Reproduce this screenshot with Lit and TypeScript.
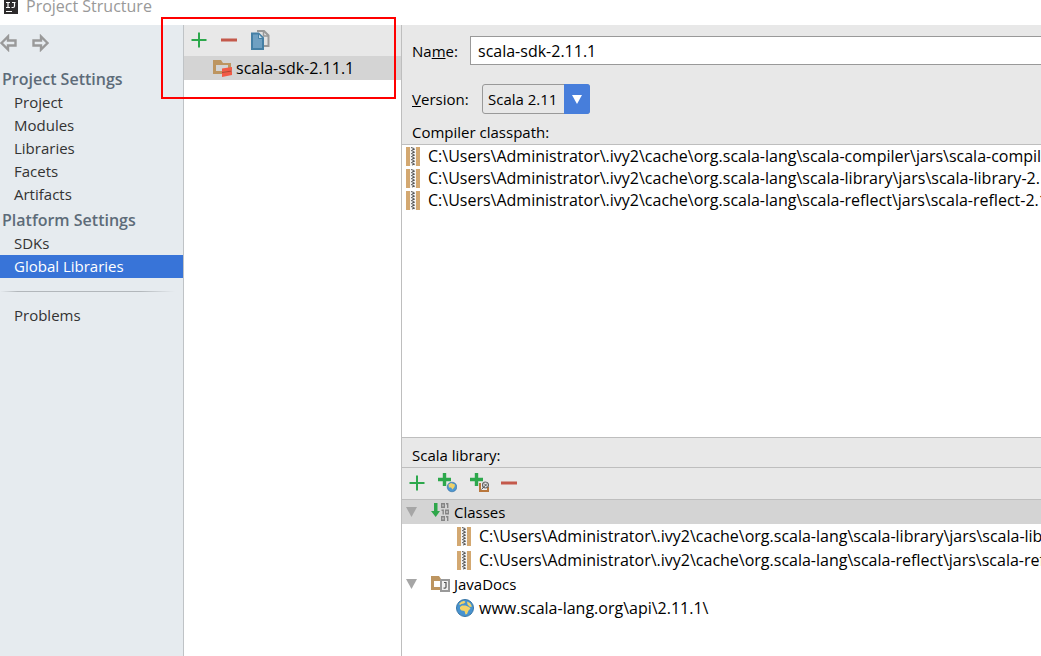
import { LitElement, html, svg, css } from "lit";
import { customElement, state } from "lit/decorators.js";

const ticks = [0, 1, 2, 3, 4, 5];
const CACHE = "C:\\Users\\Administrator\\.ivy2\\cache\\org.scala-lang\\";

const icons = {
  logo: html`<svg width="14" height="14" viewBox="0 0 14 14" aria-hidden="true">
    <rect width="14" height="14" fill="#2e2c2d" />
    <path d="M2 2.5h4M4 2.5v5M2 7.5h4M8 2.5h3.5M10.5 2.5V6q0 1.500-1.500 1.500H7.500" fill="none" stroke="#fff" stroke-width="1.200" />
    <path d="M2 11.500h6" stroke="#fff" />
  </svg>`,
  back: html`<svg width="17" height="18" viewBox="0 0 17 18" aria-hidden="true">
    <path d="M1.500 9L8 2.500V6.500H15.500V11.500H8V15.500Z" fill="none" stroke="#999" stroke-width="2.400" />
  </svg>`,
  forward: html`<svg width="17" height="18" viewBox="0 0 17 18" aria-hidden="true">
    <path d="M15.500 9L9 2.500V6.500H1.500V11.500H9V15.500Z" fill="none" stroke="#999" stroke-width="2.400" />
  </svg>`,
  add: html`<svg width="16" height="16" viewBox="0 0 16 16" aria-hidden="true">
    <path d="M8 0.500V15.500M0.500 8H15.500" stroke="#2da84c" stroke-width="2" />
  </svg>`,
  remove: html`<svg width="16" height="16" viewBox="0 0 16 16" aria-hidden="true">
    <rect y="6.500" width="16" height="3" fill="#c4594b" />
  </svg>`,
  copy: html`<svg width="20" height="20" viewBox="1 0 20 20" aria-hidden="true">
    <path d="M7 1H14L18.500 5.500V16H14" fill="#e2e2e2" stroke="#999" stroke-width="2" />
    <path d="M13.500 1V6H18" fill="none" stroke="#999" stroke-width="1.500" />
    <path d="M2 3.500H8.500L13 8V19H2Z" fill="#6fa0c2" stroke="#447fa5" stroke-width="2" />
    <path d="M8.500 3.500V8.500H13Z" fill="#c5dbe8" stroke="#447fa5" />
  </svg>`,
  sdk: html`<svg width="20" height="18" viewBox="0 0 20 18" aria-hidden="true">
    <path d="M0 1H8L10 4H18V15H0ZM3 6V12H15V6Z" fill="#bd9560" fill-rule="evenodd" />
    <path d="M9 9.500L19 8V11.500L9 13ZM9 14L19 12.500V16L9 18Z" fill="#f25a46" />
    <path d="M9 13L19 11.500V12.500L9 14Z" fill="#bb3d30" />
  </svg>`,
  addUrl: html`<svg width="20" height="20" viewBox="-1 1 20 20" aria-hidden="true">
    <path d="M6.500 1V14M0 7.500H13" stroke="#2da84c" stroke-width="3.400" />
    <circle cx="14" cy="15" r="4.800" fill="#4d97d2" stroke="#346f9e" stroke-width="0.600" />
    <path d="M10.500 12.500L13 11L17 12.500L16.500 15L14.500 17.500L13 15.500H11Z" fill="#efd168" />
  </svg>`,
  addArchive: html`<svg width="20" height="20" viewBox="-1 1 20 20" aria-hidden="true">
    <path d="M6.500 1V14M0 7.500H13" stroke="#2da84c" stroke-width="3.400" />
    <path d="M10 11V19H18V15" fill="#eee" stroke="#b9773c" stroke-width="2" />
    <circle cx="15.500" cy="13" r="3" fill="#e8e8e8" stroke="#666" stroke-width="1.200" />
    <path d="M11.500 17.500L17 11.500M14 11.500L17 14.500" stroke="#555" />
  </svg>`,
  classes: html`<svg width="19" height="20" viewBox="0 0 19 20" aria-hidden="true">
    <path d="M3 1H6.500V9H9L4.700 15L0 9H3Z" fill="#2fa74b" />
    <g fill="none" stroke="#858585" stroke-width="1.400">
      <path d="M10.700 1.700H13.300V5.300H10.700ZM15 1.700H16.700V6" />
      <path d="M10.500 8.200H12.200V12.500M14.700 8.200H17.300V11.800H14.700Z" />
      <path d="M10.700 14.700H13.300V18.300H10.700ZM15 14.700H16.700V19" />
    </g>
  </svg>`,
  docs: html`<svg width="19" height="18" viewBox="0 0 19 18" aria-hidden="true">
    <path d="M0 1H8L10 4H17V5H9V6H3V12H9V15H0Z" fill="#bd9560" />
    <rect x="10" y="5" width="8" height="11" fill="#f1f1f1" stroke="#999" stroke-width="2" />
    <path d="M13 7.500H15V12Q15 13.500 12.500 13" fill="none" stroke="#555" stroke-width="1.200" />
  </svg>`,
  globe: html`<svg width="18" height="18" viewBox="0 0 18 18" aria-hidden="true">
    <circle cx="9" cy="9" r="8.500" fill="#4793d0" stroke="#3976a5" />
    <path d="M3 5Q5 2 8 1.800L9.500 3L8 4.500L5.500 5L4 6ZM4 8L6 6.500L9.500 6.500L13 8L14.500 9.500L12.500 11.500L11 15L9.500 15.500L8.500 12L5.500 11.500L4 10ZM11 2.500L14 4L16 7.500L14 8L11.500 5.500Z" fill="#f3d468" />
  </svg>`,
  jar: html`<svg width="14" height="19" viewBox="0 0 14 19" aria-hidden="true">
    <rect width="4" height="19" fill="#d3a871" /><rect x="10" width="4" height="19" fill="#d3a871" />
    <rect x="4" width="6" height="19" fill="#f6f6f6" />
    ${ticks.map((i) => svg`<path d=${`M5 ${i * 3 + 0.5}l3 1M9 ${i * 3 + 2}l-3 1`} stroke="#555" />`)}
  </svg>`,
  open: html`<svg width="11" height="10" viewBox="0 0 11 10" aria-hidden="true"><path d="M0 0H11L5.500 10Z" fill="#a6a6a6" /></svg>`,
};

@customElement("app-root")
export class AppRoot extends LitElement {
  @state() private section = "Global Libraries";

  static styles = css`
    :host {
      display: grid;
      grid-template-rows: 25px 1fr;
      position: relative;
      min-height: 100vh;
      overflow: hidden;
      background: #fff;
      color: #000;
      font: 15px/22px "Open Sans", "Noto Sans", sans-serif;
    }
    * { box-sizing: border-box; }
    svg { display: block; flex: none; }
    button { border: 0; padding: 0; background: none; font: inherit; color: inherit; text-align: left; }
    ul { list-style: none; margin: 0; padding: 0; }
    .title { display: flex; gap: 8px; padding: 0 4px; color: #999; font-size: 16px; line-height: 13px; }
    .body { display: grid; grid-template-columns: 184px 218px minmax(0, 1fr); }
    .side { background: #e6ebef; border-right: 1px solid #bfc3c6; color: #333; }
    .history { display: flex; gap: 15px; padding: 9px 0 16px; }
    .heading { margin: 0; padding: 0 2px; font-size: 16px; line-height: 23px; font-weight: 600; color: #5d6b79; }
    .heading.next { padding-top: 3px; }
    .link { display: block; width: 100%; padding: 0 14px; line-height: 23px; }
    .link.on { background: #3874d8; color: #fff; }
    .rule { height: 1px; margin: 13px 8px 12px 0; border: 0; background: linear-gradient(90deg, #e6ebef, #b2b7bb 10%, #b2b7bb 80%, #e6ebef); }
    .libs { border-right: 1px solid #bebebe; }
    .tools { display: flex; align-items: center; gap: 14px; height: 31px; padding: 0 7px 2px; background: #e8e8e8; }
    .lib { display: flex; align-items: center; gap: 3px; width: 100%; height: 24px; padding: 0 29px; background: #d4d4d4; font-size: 16px; }
    .detail { display: flex; flex-direction: column; min-width: 0; background: #e8e8e8; }
    .field { display: flex; align-items: center; padding: 11px 0 0 10px; }
    .field.version { padding-top: 19px; }
    .name-label { width: 58px; }
    .version-label { width: 70px; }
    .name { flex: 1; min-width: 0; height: 29px; padding: 0 7px; border: 1px solid #999; border-right: 0; background: #fff; font: inherit; font-size: 16px; color: inherit; outline: 0; }
    .combo { display: grid; grid-template-columns: 82px 26px; height: 30px; }
    .combo select { grid-area: 1 / 1 / 2 / 3; appearance: none; border: 1px solid #999; border-radius: 3px; padding: 0 5px; background: #e8e8e8; font: inherit; color: inherit; }
    .arrow { grid-area: 1 / 2 / 2 / 3; z-index: 1; display: grid; place-items: center; border-radius: 0 3px 3px 0; background: #477edb; pointer-events: none; }
    .caption { padding: 7px 10px 1px; line-height: 22px; }
    .paths { height: 294px; border: solid #bebebe; border-width: 1px 0; background: #fff; font-size: 16px; }
    .path { display: flex; align-items: center; gap: 8px; height: 22px; padding-left: 4px; white-space: nowrap; overflow: hidden; }
    .caption.library { padding: 6px 10px 1px; }
    .tools.bar { height: 33px; gap: 12px; border: solid #bebebe; border-width: 1px 0; }
    .tree { flex: 1; background: #fff; }
    .row { display: flex; align-items: center; height: 24px; gap: 4px; padding-left: 4px; white-space: nowrap; overflow: hidden; }
    .row.on { background: #d4d4d4; }
    .row .toggle { margin-right: 10px; }
    .row.leaf { padding-left: 55px; gap: 8px; font-size: 16px; }
    .row.url { padding-left: 54px; gap: 5px; font-size: 16px; }
    .callout { position: absolute; left: 161px; top: 17px; width: 235px; height: 82px; border: 2px solid #f00; pointer-events: none; }
  `;

  private link(name: string) {
    return html`<li><button class="link ${this.section === name ? "on" : ""}" @click=${() => (this.section = name)}>${name}</button></li>`;
  }

  private tool(label: string, icon: unknown) {
    return html`<button aria-label=${label}>${icon}</button>`;
  }

  render() {
    return html`
      <header class="title">${icons.logo}<span>Project Structure</span></header>
      <div class="body">
        <nav class="side">
          <div class="history">${this.tool("Back", icons.back)}${this.tool("Forward", icons.forward)}</div>
          <h2 class="heading">Project Settings</h2>
          <ul>${["Project", "Modules", "Libraries", "Facets", "Artifacts"].map((n) => this.link(n))}</ul>
          <h2 class="heading next">Platform Settings</h2>
          <ul>${["SDKs", "Global Libraries"].map((n) => this.link(n))}</ul>
          <hr class="rule" />
          <ul>${this.link("Problems")}</ul>
        </nav>
        <section class="libs">
          <div class="tools">${this.tool("Add", icons.add)}${this.tool("Remove", icons.remove)}${this.tool("Copy", icons.copy)}</div>
          <button class="lib">${icons.sdk}scala-sdk-2.11.1</button>
        </section>
        <main class="detail">
          <div class="field">
            <label class="name-label" for="name">Na<u>m</u>e:</label>
            <input class="name" id="name" value="scala-sdk-2.11.1" />
          </div>
          <div class="field version">
            <label class="version-label" for="version"><u>V</u>ersion:</label>
            <div class="combo">
              <select id="version"><option>Scala 2.11</option></select>
              <span class="arrow"><svg width="10" height="9" viewBox="0 0 10 9"><path d="M0 0H10L5 9Z" fill="#fff" /></svg></span>
            </div>
          </div>
          <div class="caption">Compiler classpath:</div>
          <ul class="paths">
            ${["compiler", "library", "reflect"].map((n) => html`<li class="path">${icons.jar}<span>${CACHE}scala-${n}\\jars\\scala-${n}-2.11.1.jar</span></li>`)}
          </ul>
          <div class="caption library">Scala library:</div>
          <div class="tools bar">
            ${this.tool("Add", icons.add)}${this.tool("Add URL", icons.addUrl)}${this.tool("Add archive", icons.addArchive)}${this.tool("Remove", icons.remove)}
          </div>
          <ul class="tree">
            <li class="row on"><button class="toggle" aria-label="Collapse Classes">${icons.open}</button>${icons.classes}<span>Classes</span></li>
            ${["library", "reflect"].map((n) => html`<li class="row leaf">${icons.jar}<span>${CACHE}scala-${n}\\jars\\scala-${n}-2.11.1.jar</span></li>`)}
            <li class="row"><button class="toggle" aria-label="Collapse JavaDocs">${icons.open}</button>${icons.docs}<span>JavaDocs</span></li>
            <li class="row url">${icons.globe}<span>www.scala-lang.org\\api\\2.11.1\\</span></li>
          </ul>
        </main>
      </div>
      <div class="callout"></div>
    `;
  }
}
